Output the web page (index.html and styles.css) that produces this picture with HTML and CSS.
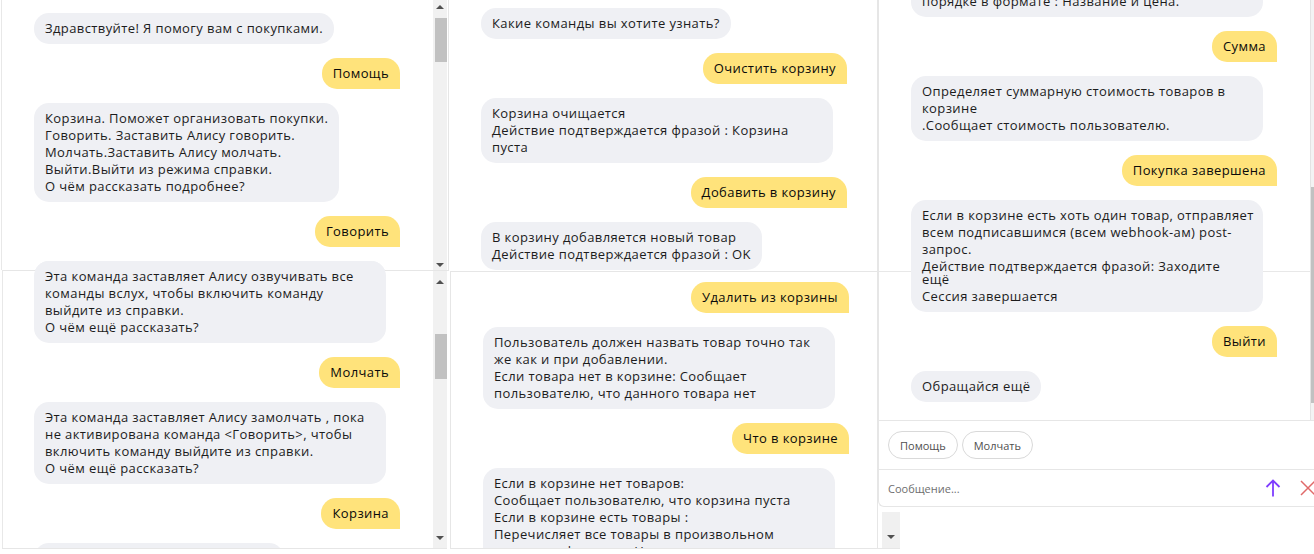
FILE: index.html
```html
<!DOCTYPE html>
<html lang="ru">
<head>
<meta charset="utf-8">
<title>Алиса — покупки</title>
<link rel="stylesheet" href="styles.css">
</head>
<body>
<div class="collage">
  <div class="col">
    <section class="shot shot-a">
      <div class="msgs msgs-a">
        <div class="msg bot">Здравствуйте! Я помогу вам с покупками.</div>
        <div class="msg user">Помощь</div>
        <div class="msg bot">Корзина. Поможет организовать покупки.<br>Говорить. Заставить Алису говорить.<br>Молчать.Заставить Алису молчать.<br>Выйти.Выйти из режима справки.<br>О чём рассказать подробнее?</div>
        <div class="msg user">Говорить</div>
        <div class="msg bot wide">Эта команда заставляет Алису озвучивать все<br>команды вслух, чтобы включить команду<br>выйдите из справки.<br>О чём ещё рассказать?</div>
      </div>
      <div class="sb sb-a"><span class="sb-btn sb-up"></span><span class="sb-thumb"></span><span class="sb-fill"></span><span class="sb-btn sb-down"></span></div>
    </section>
    <section class="shot shot-b">
      <div class="msgs msgs-b">
        <div class="msg bot wide">Эта команда заставляет Алису озвучивать все<br>команды вслух, чтобы включить команду<br>выйдите из справки.<br>О чём ещё рассказать?</div>
        <div class="msg user">Молчать</div>
        <div class="msg bot wide">Эта команда заставляет Алису замолчать , пока<br>не активирована команда &lt;Говорить&gt;, чтобы<br>включить команду выйдите из справки.<br>О чём ещё рассказать?</div>
        <div class="msg user">Корзина</div>
        <div class="msg bot">Какие команды вы хотите узнать?</div>
      </div>
      <div class="sb sb-b"><span class="sb-btn sb-up"></span><span class="sb-thumb"></span><span class="sb-fill"></span><span class="sb-btn sb-down"></span></div>
    </section>
    <div class="rule rule-a"></div>
  </div>

  <div class="col">
    <section class="shot shot-c">
      <div class="msgs msgs-c">
        <div class="msg bot">Какие команды вы хотите узнать?</div>
        <div class="msg user">Очистить корзину</div>
        <div class="msg bot wide">Корзина очищается<br>Действие подтверждается фразой : Корзина<br>пуста</div>
        <div class="msg user">Добавить в корзину</div>
        <div class="msg bot">В корзину добавляется новый товар<br>Действие подтверждается фразой : OK</div>
      </div>
    </section>
    <section class="shot shot-d">
      <div class="msgs msgs-d">
        <div class="msg user">Удалить из корзины</div>
        <div class="msg bot wide">Пользователь должен назвать товар точно так<br>же как и при добавлении.<br>Если товара нет в корзине: Сообщает<br>пользователю, что данного товара нет</div>
        <div class="msg user">Что в корзине</div>
        <div class="msg bot wide">Если в корзине нет товаров:<br>Сообщает пользователю, что корзина пуста<br>Если в корзине есть товары :<br>Перечисляет все товары в произвольном<br>порядке в формате : Название и цена.</div>
      </div>
    </section>
    <div class="rule rule-d"></div>
  </div>

  <div class="col">
    <section class="shot shot-e">
      <div class="chat-e">
        <div class="msgs msgs-e">
          <div class="msg bot wide">Если в корзине нет товаров:<br>Сообщает пользователю, что корзина пуста<br>Если в корзине есть товары :<br>Перечисляет все товары в произвольном<br>порядке в формате : Название и цена.</div>
          <div class="msg user">Сумма</div>
          <div class="msg bot wide">Определяет суммарную стоимость товаров в<br>корзине<br>.Сообщает стоимость пользователю.</div>
          <div class="msg user">Покупка завершена</div>
          <div class="msg bot wide">Если в корзине есть хоть один товар, отправляет<br>всем подписавшимся (всем webhook-ам) post-<br>запрос.<br>Действие подтверждается фразой: Заходите<span class="seam-line">ещё</span>Сессия завершается</div>
          <div class="msg user">Выйти</div>
          <div class="msg bot">Обращайся ещё</div>
        </div>
        <div class="sb sb-e"><span class="sb-thumb"></span></div>
      </div>
      <div class="chips">
        <span class="chip">Помощь</span>
        <span class="chip">Молчать</span>
      </div>
      <div class="composer">
        <span class="placeholder">Сообщение...</span>
        <svg class="send" width="16" height="18" viewBox="0 0 16 18" aria-hidden="true"><path d="M8 17.5V1.5M1.5 8L8 1.5L14.5 8" fill="none" stroke="#7f3dff" stroke-width="1.8"/></svg>
        <svg class="close" width="16" height="16" viewBox="0 0 16 16" aria-hidden="true"><path d="M1 1L15 15M15 1L1 15" fill="none" stroke="#e06a6a" stroke-width="1.5"/></svg>
      </div>
    </section>
    <div class="stub"></div>
    <div class="rule rule-e"></div>
  </div>
</div>
</body>
</html>
```

FILE: styles.css
```css
* { box-sizing: border-box; margin: 0; padding: 0; }
html, body { width: 1314px; height: 554px; overflow: hidden; background: #fff; }
body {
  font-family: "Open Sans", "Noto Sans", sans-serif;
  font-size: 13px;
  line-height: 17px;
  color: #141414;
}
.collage { display: grid; grid-template-columns: 448px 430px 436px; height: 554px; }
.col { display: flex; flex-direction: column; min-width: 0; }

.shot { display: flex; overflow: hidden; flex: none; }
.msgs { flex: 1; min-width: 0; display: flex; flex-direction: column; align-items: flex-start; gap: 14px; }
.msg { flex: none; padding: 7px 11px; border-radius: 15px; white-space: nowrap; letter-spacing: 0.4px; }
.bot { background: #eff0f4; color: #1c1c1c; }
.user { align-self: flex-end; background: #ffe37b; border-bottom-right-radius: 0; color: #0a0a0a; }
.wide { width: 352px; }
.seam-line { display: block; margin-top: -4px; }

/* left column */
.shot-a { height: 270px; margin-left: 1px; border-left: 1px solid #e8e8e8; }
.msgs-a { padding: 13px 33px 0 32px; }
.shot-b {
  height: 278px; margin-left: 2px;
  border-left: 1px solid #e8e8e8; border-top: 1px solid #e6e6e6;
  overflow: visible; clip-path: inset(-12px 0 0 0);
}
.msgs-b { padding: 0 33px 0 31px; }
.msgs-b > .msg:first-child { margin-top: -10px; }

/* scrollbars */
.sb { flex: none; width: 14px; margin-right: 1px; background: #f1f1f1; display: flex; flex-direction: column; }
.sb-btn { flex: none; display: flex; align-items: center; justify-content: center; }
.sb-btn::before { content: ""; border-left: 4px solid transparent; border-right: 4px solid transparent; }
.sb-up::before { border-bottom: 4px solid #505050; }
.sb-down::before { border-top: 4px solid #505050; }
.sb-thumb { flex: none; display: block; background: #c1c1c1; margin-left: 2px; }
.sb-fill { flex: 1; }
.sb-a .sb-up { height: 14px; }
.sb-a .sb-thumb { margin-top: 4px; height: 44px; }
.sb-a .sb-down { height: 10px; }
.sb-b .sb-up { height: 22px; }
.sb-b .sb-thumb { margin-top: 41px; height: 45px; }
.sb-b .sb-down { height: 20px; }

.rule { flex: none; height: 1px; background: #e6e6e6; }
.rule-a { margin: 0 1px 0 2px; }
.rule-d { margin-left: 2px; }
.rule-e { width: 22px; }

/* middle column */
.shot-c { height: 271px; border-left: 1px solid #e6e6e6; border-right: 1px solid #e6e6e6; }
.msgs-c { padding: 8px 30px 0 32px; }
.shot-d {
  height: 277px; margin-left: 2px;
  border-left: 1px solid #e6e6e6; border-right: 1px solid #e6e6e6; border-top: 1px solid #e6e6e6;
}
.msgs-d { padding: 10px 28px 0 32px; }

/* right column */
.shot-e {
  height: 507px; flex-direction: column;
  border-left: 1px solid #e6e6e6; border-bottom: 1px solid #e6e6e6;
  border-bottom-left-radius: 6px; overflow: visible;
}
.chat-e { flex: none; height: 420px; display: flex; overflow: hidden; }
.msgs-e {
  padding: 0 33px 0 32px;
  background: linear-gradient(to bottom, #fff 0, #fff 271px, #e8e8e8 271px, #e8e8e8 272px, #fff 272px);
}
.msgs-e > .msg:first-child { margin-top: -82px; }
.sb-e { width: 4px; margin-right: 0; background: #f3f3f3; border-left: 1px solid #e3e3e3; }
.sb-e .sb-thumb { margin: 187px 0 0 0; height: 216px; }

.chips {
  flex: none; height: 49px; border-top: 1px solid #e6e6e6;
  display: flex; align-items: center; gap: 4px; padding-left: 9px;
}
.chip {
  height: 28px; padding: 0 11px; border: 1px solid #d9d9d9; border-radius: 14px;
  font-size: 11px; color: #4f4f4f; display: flex; align-items: center;
}
.composer {
  flex: none; height: 37px; border-top: 1px solid #e6e6e6;
  display: flex; align-items: center; padding-left: 9px;
}
.placeholder { flex: 1; font-size: 11px; color: #6e6e6e; }
.send { flex: none; margin-right: 19px; }
.close { flex: none; margin-right: -2px; }

.stub {
  flex: none; margin: 5px 0 0 4px; width: 18px; height: 36px; background: #f0f0f0;
  display: flex; align-items: flex-end; justify-content: center; padding-bottom: 9px;
}
.stub::before { content: ""; border-left: 4px solid transparent; border-right: 4px solid transparent; border-top: 4px solid #505050; }
```
